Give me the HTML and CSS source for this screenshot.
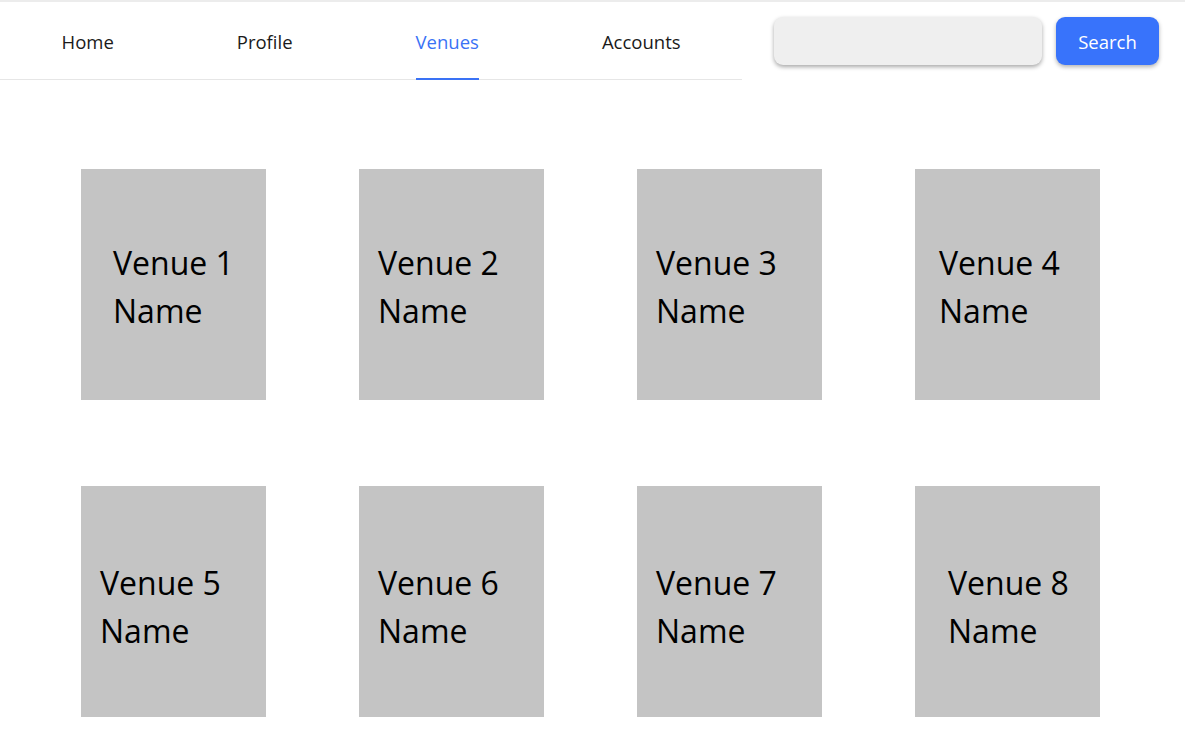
FILE: index.html
```html
<!DOCTYPE html>
<html lang="en">
<head>
<meta charset="utf-8">
<title>Venues</title>
<link rel="stylesheet" href="styles.css">
</head>
<body>
<header class="topbar">
  <nav class="tabs">
    <a class="tab" href="#"><span class="tab-label">Home</span></a>
    <a class="tab" href="#"><span class="tab-label">Profile</span></a>
    <a class="tab tab-active" href="#"><span class="tab-label">Venues</span></a>
    <a class="tab" href="#"><span class="tab-label">Accounts</span></a>
  </nav>
  <form class="search">
    <input class="search-input" type="text" aria-label="Search">
    <button class="search-button" type="button">Search</button>
  </form>
</header>
<main class="grid">
  <div class="card row-a inset-1"><span>Venue 1<br>Name</span></div>
  <div class="card row-a inset-2"><span>Venue 2<br>Name</span></div>
  <div class="card row-a inset-2"><span>Venue 3<br>Name</span></div>
  <div class="card row-a inset-3"><span>Venue 4<br>Name</span></div>
  <div class="card row-b inset-2"><span>Venue 5<br>Name</span></div>
  <div class="card row-b inset-2"><span>Venue 6<br>Name</span></div>
  <div class="card row-b inset-2"><span>Venue 7<br>Name</span></div>
  <div class="card row-b inset-4"><span>Venue 8<br>Name</span></div>
</main>
</body>
</html>
```
FILE: styles.css
```css
html, body {
  margin: 0;
  padding: 0;
  background: #ffffff;
  font-family: "Open Sans", "Noto Sans", sans-serif;
  color: #111111;
}

.topbar {
  display: flex;
  align-items: flex-start;
  border-top: 2px solid #ececec;
  height: 78px;
}

.tabs {
  display: flex;
  width: 742px;
  height: 77px;
  border-bottom: 1px solid #e6e6e6;
}

.tab {
  display: flex;
  padding: 0 61.5px;
  text-decoration: none;
  color: #1a1a1a;
  font-size: 18.5px;
}

.tab-label {
  display: flex;
  align-items: center;
  border-bottom: 2px solid transparent;
  padding-top: 2px;
  box-sizing: border-box;
  height: 78px;
}

.tab-active {
  color: #3a72f5;
}

.tab-active .tab-label {
  border-bottom-color: #3a72f5;
}

.search {
  display: flex;
  gap: 14px;
  margin: 15px 0 0 32px;
}

.search-input {
  width: 268px;
  height: 48px;
  box-sizing: border-box;
  border: none;
  border-radius: 9px;
  background: #efefef;
  box-shadow: 0 2px 4px rgba(0, 0, 0, 0.35);
  outline: none;
}

.search-button {
  width: 103px;
  height: 48px;
  border: none;
  border-radius: 9px;
  background: #3873fb;
  color: #ffffff;
  font-family: "Open Sans", "Noto Sans", sans-serif;
  font-size: 18.5px;
  box-shadow: 0 2px 4px rgba(0, 0, 0, 0.3);
  padding: 0;
}

.grid {
  display: grid;
  grid-template-columns: repeat(4, 185px);
  column-gap: 93px;
  row-gap: 86px;
  padding: 89px 0 0 81px;
}

.card {
  height: 231px;
  box-sizing: border-box;
  background: #c4c4c4;
  font-size: 32px;
  line-height: 48px;
  color: #000000;
  white-space: nowrap;
}

.row-a { padding-top: 70px; }
.row-b { padding-top: 73px; }

.inset-1 { padding-left: 32px; }
.inset-2 { padding-left: 19px; }
.inset-3 { padding-left: 24px; }
.inset-4 { padding-left: 33px; }
```
